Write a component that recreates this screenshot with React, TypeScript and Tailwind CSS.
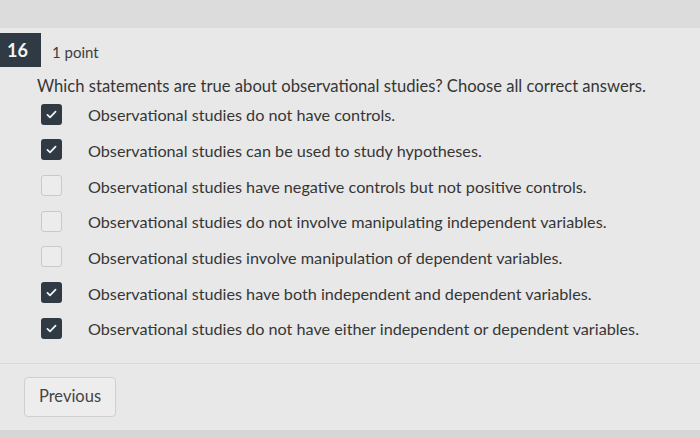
import React from "react"

const options = [
  { text: "Observational studies do not have controls.", checked: true },
  { text: "Observational studies can be used to study hypotheses.", checked: true },
  { text: "Observational studies have negative controls but not positive controls.", checked: false },
  { text: "Observational studies do not involve manipulating independent variables.", checked: false },
  { text: "Observational studies involve manipulation of dependent variables.", checked: false },
  { text: "Observational studies have both independent and dependent variables.", checked: true },
  { text: "Observational studies do not have either independent or dependent variables.", checked: true },
]

function Checkbox({ checked }: { checked: boolean }) {
  if (checked) {
    return (
      <div className="w-[21px] h-[21px] rounded-[3px] bg-[#2f3a44] flex items-center justify-center shrink-0">
        <svg width="13" height="13" viewBox="0 0 16 16" fill="none">
          <path d="M3 8.5l3.2 3L13 4.5" stroke="#f2f2f2" strokeWidth="2.2" strokeLinecap="round" strokeLinejoin="round" />
        </svg>
      </div>
    )
  }
  return <div className="w-[21px] h-[21px] rounded-[3px] border border-[#c9c9c9] bg-[#ececec] shrink-0"></div>
}

export default function App() {
  return (
    <div className="w-[700px] h-[438px] overflow-hidden bg-[#d6d6d6] text-[#363636]" style={{ fontFamily: "Lato, 'Open Sans', sans-serif" }}>
      <div className="h-[28px] bg-[#dcdcdc]"></div>
      <div className="bg-[#e8e8e8] h-[402px]">
        <div className="flex items-center pt-[5px]">
          <div className="w-[41px] h-[34px] bg-[#2f3a44] text-[#f4f4f4] text-[18px] font-bold flex items-center justify-center pr-[6px]">16</div>
          <div className="ml-[11px] text-[15px] text-[#3e3e3e] mt-[4px]">1 point</div>
        </div>
        <div className="pl-[37px] mt-[8px] text-[16.6px] leading-[22px] h-[22px]">
          Which statements are true about observational studies? Choose all correct answers.
        </div>
        <div className="pl-[41px] mt-[6.5px] flex flex-col gap-[14.7px]">
          {options.map((o, i) => (
            <div key={i} className="flex items-center h-[21px]">
              <Checkbox checked={o.checked} />
              <span className="ml-[26px] mt-[3px] text-[16.2px]">{o.text}</span>
            </div>
          ))}
        </div>
        <div className="mt-[24px] border-t border-[#d8d8d8]"></div>
        <div className="pl-[24px] pt-[13px]">
          <button className="w-[92px] h-[40px] border border-[#cfcfcf] rounded-[4px] bg-[#ededed] text-[16.5px] text-[#444]">Previous</button>
        </div>
      </div>
    </div>
  )
}
